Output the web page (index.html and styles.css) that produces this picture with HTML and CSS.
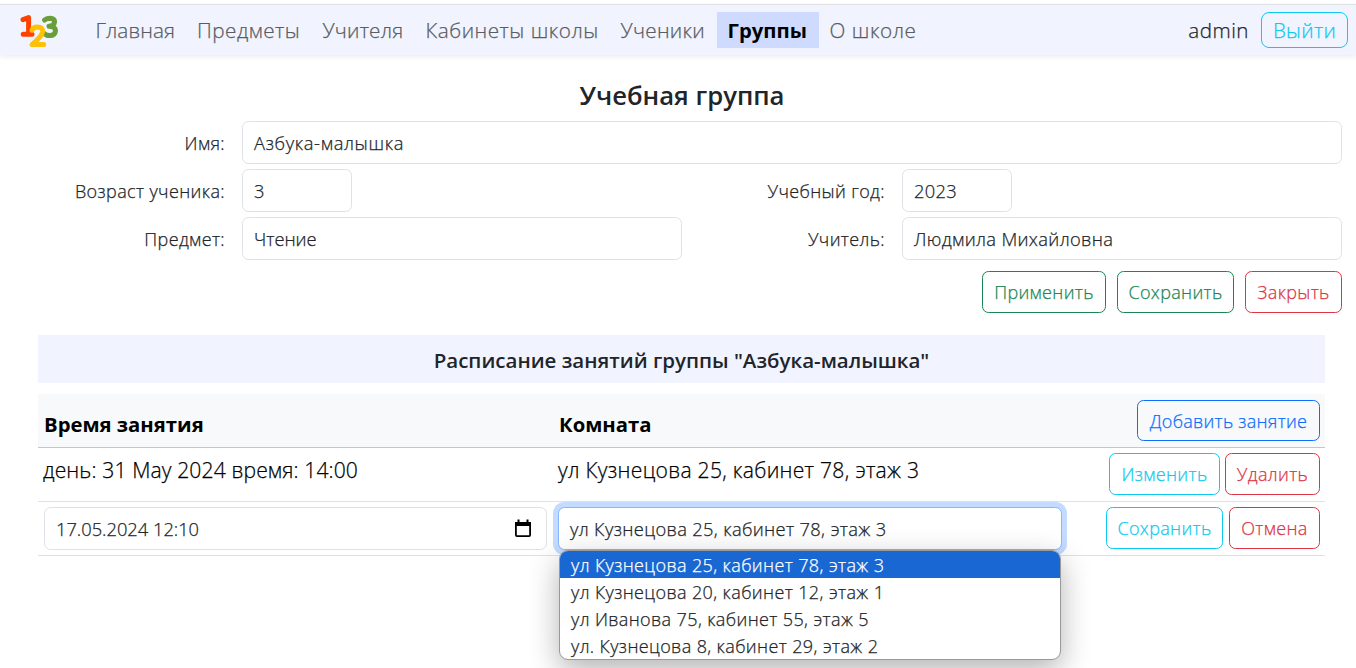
FILE: index.html
```html
<!DOCTYPE html>
<html lang="ru">
<head>
<meta charset="utf-8">
<title>Учебная группа</title>
<link rel="stylesheet" href="styles.css">
</head>
<body>
<header class="navbar">
  <svg class="logo" viewBox="0 0 40 36" width="40" height="36" aria-hidden="true">
    <path class="three" d="M24.6 7Q27 5.3 30 5.3Q34.6 5.5 34.6 9Q34 13 29 13.3Q35.5 13.5 35.5 18Q35 22.6 30 22.6Q26.5 22.6 24 20.5"/>
    <path class="one" d="M3 6.7L8.6 4.7V21M3.2 21.3H12"/>
    <path class="two" d="M12 17.3Q13 14 17.5 14Q23 14.2 22.6 18.8Q22 23 12 31.6H23.7"/>
  </svg>
  <nav class="menu">
    <a class="w1"><span>Главная</span></a>
    <a class="w2"><span>Предметы</span></a>
    <a class="w3"><span>Учителя</span></a>
    <a class="w4"><span>Кабинеты школы</span></a>
    <a class="w5"><span>Ученики</span></a>
    <a class="w6 active"><span>Группы</span></a>
    <a class="w7"><span>О школе</span></a>
  </nav>
  <span class="user">admin</span>
  <button class="btn info logout">Выйти</button>
</header>
<main>
  <h1>Учебная группа</h1>
  <form class="form">
    <label>Имя:</label>
    <div class="control wide">Азбука-малышка</div>
    <label>Возраст ученика:</label>
    <div class="control short">3</div>
    <label>Учебный год:</label>
    <div class="control short">2023</div>
    <label>Предмет:</label>
    <div class="control subject">Чтение</div>
    <label>Учитель:</label>
    <div class="control">Людмила Михайловна</div>
  </form>
  <div class="actions">
    <button class="btn success b-apply">Применить</button>
    <button class="btn success b-save">Сохранить</button>
    <button class="btn danger b-close">Закрыть</button>
  </div>
  <section class="schedule">
    <h2>Расписание занятий группы "Азбука-малышка"</h2>
    <div class="row head">
      <div class="cell title">Время занятия</div>
      <div class="cell title">Комната</div>
      <div class="cell tools"><button class="btn primary b-add">Добавить занятие</button></div>
    </div>
    <div class="row">
      <div class="cell value day">день: 31 May 2024 время: 14:00</div>
      <div class="cell value">ул Кузнецова 25, кабинет 78, этаж 3</div>
      <div class="cell tools tight"><button class="btn info b-edit">Изменить</button><button class="btn danger b-delete">Удалить</button></div>
    </div>
    <div class="row">
      <div class="cell">
        <div class="control date"><span>17.05.2024 12:10</span>
          <svg width="18" height="19" viewBox="0 0 18 19" aria-hidden="true"><path d="M1 3h16v4H1zM3.5 0.5h2V4h-2zM12.5 0.5h2V4h-2z"/><rect x="1.9" y="3.9" width="14.2" height="13.2" rx="1" fill="none" stroke="#000" stroke-width="1.8"/></svg>
        </div>
      </div>
      <div class="cell picker">
        <div class="control focused">ул Кузнецова 25, кабинет 78, этаж 3</div>
        <ul class="options">
          <li class="selected">ул Кузнецова 25, кабинет 78, этаж 3</li>
          <li>ул Кузнецова 20, кабинет 12, этаж 1</li>
          <li>ул Иванова 75, кабинет 55, этаж 5</li>
          <li>ул. Кузнецова 8, кабинет 29, этаж 2</li>
        </ul>
      </div>
      <div class="cell tools"><button class="btn info b-save">Сохранить</button><button class="btn danger b-cancel">Отмена</button></div>
    </div>
  </section>
</main>
</body>
</html>
```
FILE: styles.css
```css
* { box-sizing: border-box; }
body {
  margin: 0;
  height: 668px;
  overflow: hidden;
  background: #fff;
  color: #212529;
  font: 300 18px/27px "Open Sans", "Noto Sans", sans-serif;
  letter-spacing: .38px;
  -webkit-text-stroke: .25px;
}
.navbar {
  display: flex;
  align-items: center;
  height: 51px;
  margin-top: 4px;
  padding: 0 8px 0 20px;
  border-top: 1px solid #dee0e2;
  background: #f1f4ff;
  box-shadow: 0 2px 5px rgba(0, 0, 0, .08);
}
.logo {
  margin: 2px 24.5px 0 0;
  fill: none;
  stroke-width: 5;
  stroke-linecap: round;
  stroke-linejoin: round;
}
.one { stroke: #ff4200; }
.two { stroke: #ffc107; }
.three { stroke: #689f38; }
.menu { display: flex; }
.menu a {
  height: 36px;
  padding: 0 11px;
  color: #595c62;
  font-size: 20.7px;
  line-height: 36px;
  white-space: nowrap;
}
.menu .active { background: #cfdaff; color: #000; font-size: 20.3px; font-weight: 700; }
.w1 { width: 101.5px; letter-spacing: .1px; }
.w2 { width: 125.5px; letter-spacing: .5px; }
.w3 { width: 103px; letter-spacing: .2px; }
.w4 { width: 195px; letter-spacing: .5px; }
.w5 { width: 107px; letter-spacing: .3px; }
.w6 { width: 102px; letter-spacing: .1px; }
.w7 { width: 108px; letter-spacing: .55px; }
.user { margin-left: auto; margin-right: 12px; font-size: 20.6px; letter-spacing: .5px; }
.btn {
  display: block;
  height: 42px;
  padding: 0;
  border: 1px solid;
  border-radius: 6.5px;
  background: transparent;
  font: inherit;
  letter-spacing: .35px;
  text-align: center;
  white-space: nowrap;
}
.logout { width: 87px; height: 36px; border-radius: 8px; font-size: 20.5px; }
.info { color: #0dcaf0; }
.success { color: #198754; }
.danger { color: #dc3545; }
.primary { color: #0d6efd; height: 41px; padding-top: 1px; letter-spacing: .27px; }
.b-apply { width: 124px; }
.b-save { width: 117px; }
.b-close { width: 97px; }
.b-add { width: 183px; }
.b-edit { width: 111px; }
.b-delete { width: 95px; }
.b-cancel { width: 91px; }
h1, h2, .title, .active { letter-spacing: 0; -webkit-text-stroke: 0; }
h1 {
  margin: 0;
  padding: 24px 0 9px 8px;
  font-size: 25.7px;
  font-weight: 600;
  line-height: 33px;
  text-align: center;
}
.form {
  display: grid;
  grid-template-columns: 220px 440px 220px 440px;
  row-gap: 5px;
  margin: 0 14px 0 22px;
}
label { padding: 2px 17px 0 0; line-height: 41px; text-align: right; }
.control {
  height: 43px;
  padding: 0 11px;
  border: 1px solid #dee2e6;
  border-radius: 6.5px;
  background: #fff;
  font-size: 18.3px;
  letter-spacing: .34px;
  line-height: 42px;
  white-space: nowrap;
}
.wide { grid-column: span 3; letter-spacing: .65px; }
.subject { letter-spacing: 0; }
.short { width: 110px; }
.actions {
  display: flex;
  justify-content: flex-end;
  gap: 11px;
  padding: 11px 14px 22px 0;
}
.schedule { width: 1287px; margin-left: 38px; }
h2 {
  height: 48px;
  margin: 0 0 11px;
  background: #f1f4ff;
  font-size: 20.5px;
  font-weight: 600;
  line-height: 50px;
  text-align: center;
}
.row {
  display: grid;
  grid-template-columns: 515px 515px 257px;
  height: 54px;
  border-bottom: 1px solid #dee2e6;
  color: #000;
}
.head { background: #f8f9fa; border-bottom-color: #c3c7cb; }
.cell { padding: 5px 6px; }
.title { padding-top: 17px; font-size: 20.3px; font-weight: 700; }
.value { padding-top: 8px; padding-left: 5px; font-size: 21.1px; letter-spacing: .28px; }
.day { letter-spacing: .12px; }
.tools { display: flex; justify-content: flex-end; align-items: flex-start; gap: 6px; padding-right: 5px; }
.tight { gap: 5px; }
.head .tools { padding-top: 6px; }
.date { display: flex; align-items: center; justify-content: space-between; color: #212529; padding-right: 14px; letter-spacing: 0; }
.picker { position: relative; padding-left: 5px; }
.focused { border-color: #86b7fe; box-shadow: 0 0 0 5px #c2dbfe; color: #212529; }
.options {
  position: absolute;
  top: 48px;
  left: 6px;
  width: 502px;
  height: 110px;
  margin: 0;
  padding: 0;
  border: 1px solid #999;
  border-radius: 9px;
  background: #fff;
  box-shadow: 0 10px 30px rgba(0, 0, 0, .3);
  color: #212529;
  list-style: none;
}
.options li { height: 27px; padding-left: 11px; line-height: 28px; }
.options .selected { border-radius: 8px 8px 0 0; background: #1967d2; color: #fff; }
```
